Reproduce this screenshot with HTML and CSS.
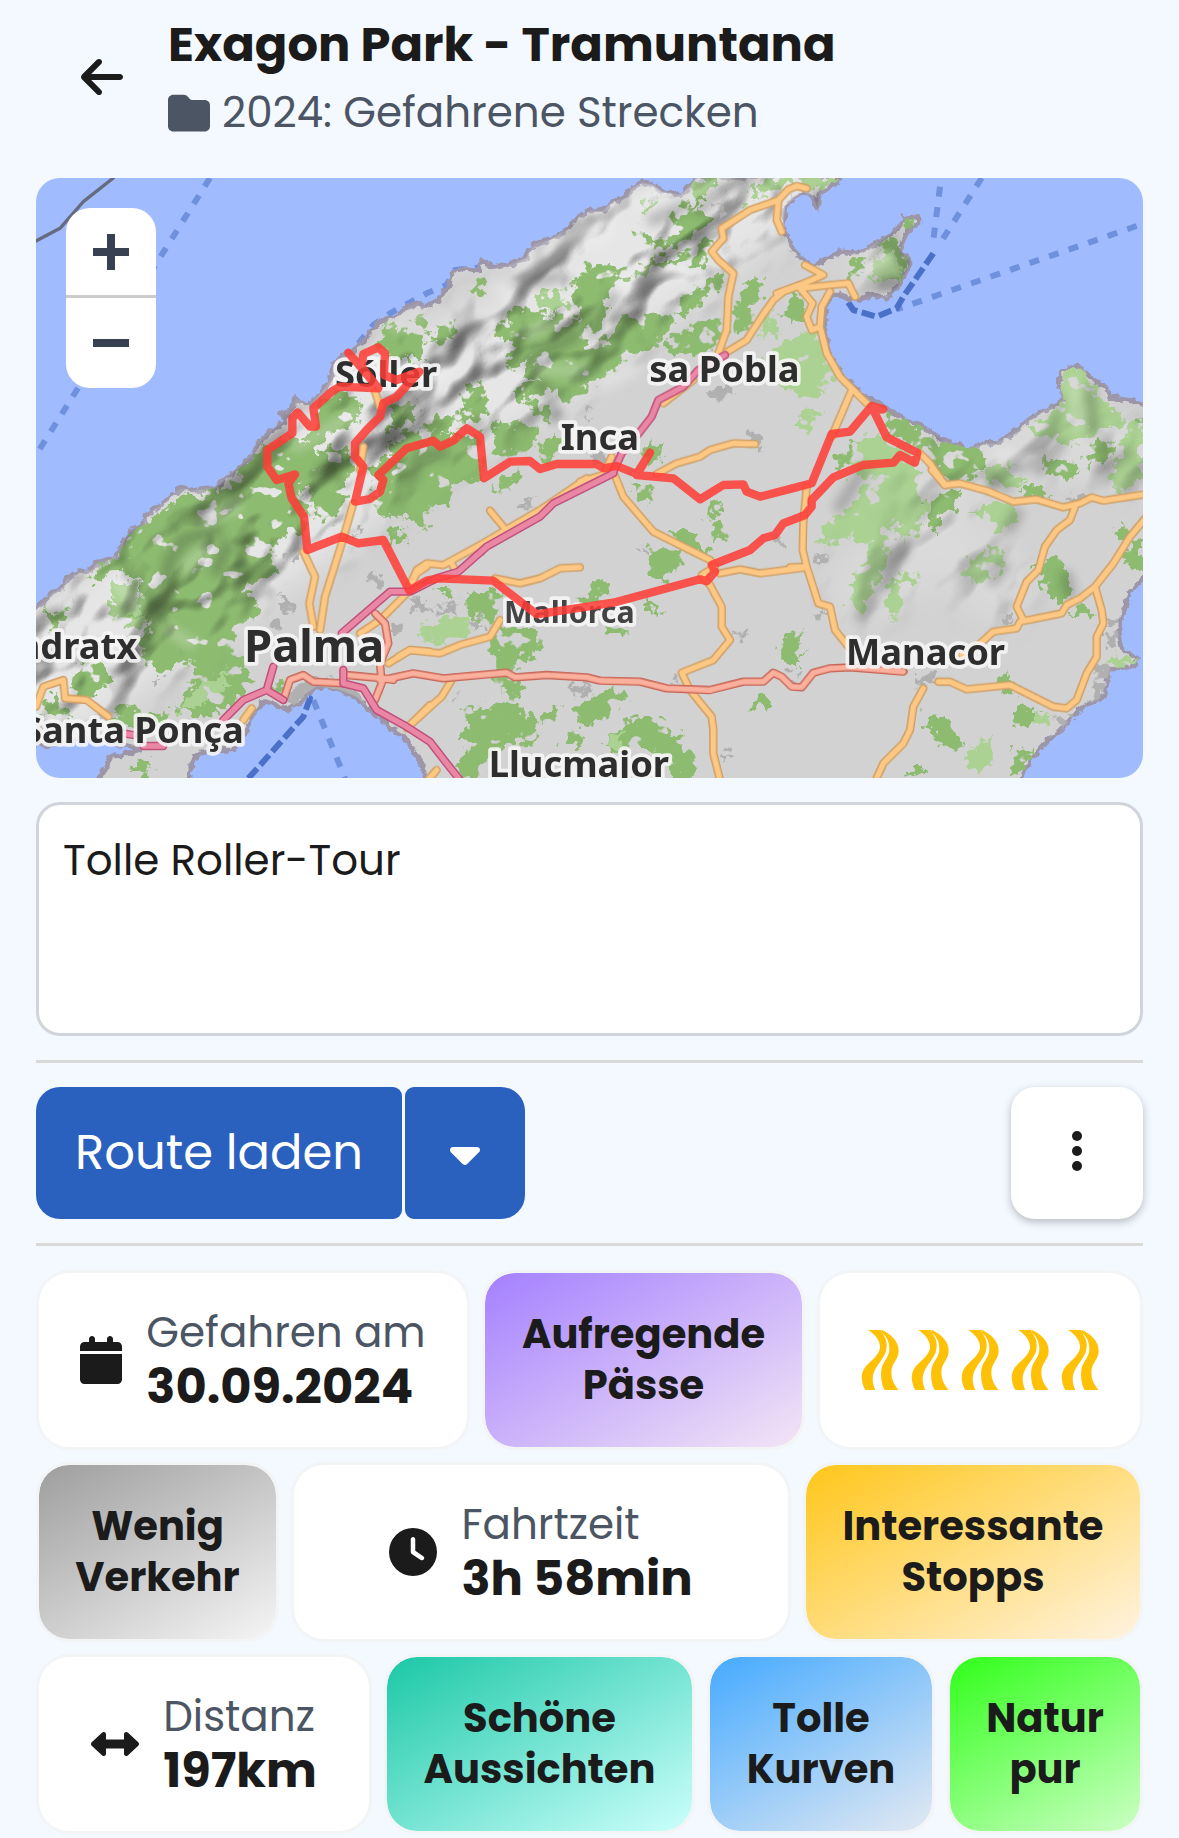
FILE: index.html
```html
<!DOCTYPE html>
<html lang="de">
<head>
    <meta charset="UTF-8">
    <meta name="viewport" content="width=device-width, initial-scale=1.0">
    <title>Exagon Park - Tramuntana</title>
    <link rel="stylesheet" href="styles.css">
</head>
<body>

    <header class="header">
        <a class="back" href="#" aria-label="Zurück">
            <svg viewBox="0 0 448 512" width="42" height="48"><path d="M9.4 233.4c-12.5 12.5-12.5 32.8 0 45.3l160 160c12.5 12.5 32.8 12.5 45.3 0s12.5-32.8 0-45.3L109.2 288 416 288c17.7 0 32-14.3 32-32s-14.3-32-32-32l-306.7 0L214.6 118.6c12.5-12.5 12.5-32.8 0-45.3s-32.8-12.5-45.3 0l-160 160z"/></svg>
        </a>
        <div class="heading">
            <h1>Exagon Park - Tramuntana</h1>
            <p class="folder">
                <svg viewBox="0 0 512 512" width="42" height="42"><path d="M64 480H448c35.3 0 64-28.7 64-64V160c0-35.3-28.7-64-64-64H288c-10.1 0-19.6-4.7-25.6-12.8L243.2 57.6C231.1 41.5 212.1 32 192 32H64C28.7 32 0 60.7 0 96V416c0 35.3 28.7 64 64 64z"/></svg>
                <span>2024: Gefahrene Strecken</span>
            </p>
        </div>
    </header>

    <main class="content">

        <div class="map">
            <svg class="map-canvas" viewBox="18 24 3321 1800" preserveAspectRatio="xMidYMid slice" role="img" aria-label="Karte von Mallorca mit der Route">
                <defs>
                    <!-- roughens forest edges and punches small clearings -->
                    <filter id="rough" x="-5%" y="-5%" width="110%" height="110%">
                        <feTurbulence type="fractalNoise" baseFrequency="0.035" numOctaves="3" seed="4" result="noise"/>
                        <feDisplacementMap in="SourceGraphic" in2="noise" scale="70" xChannelSelector="R" yChannelSelector="G" result="shape"/>
                        <feTurbulence type="fractalNoise" baseFrequency="0.014 0.018" numOctaves="3" seed="21"/>
                        <feColorMatrix values="0 0 0 0 0  0 0 0 0 0  0 0 0 0 0  20 0 0 0 -6" result="holes"/>
                        <feComposite in="shape" in2="holes" operator="in"/>
                    </filter>
                    <filter id="coast" x="-5%" y="-5%" width="110%" height="110%">
                        <feTurbulence type="fractalNoise" baseFrequency="0.05" numOctaves="2" seed="9"/>
                        <feDisplacementMap in="SourceGraphic" scale="24" xChannelSelector="R" yChannelSelector="G"/>
                    </filter>
                    <filter id="soft" x="-20%" y="-20%" width="140%" height="140%">
                        <feGaussianBlur stdDeviation="14"/>
                    </filter>
                    <filter id="hills" x="0%" y="0%" width="100%" height="100%" color-interpolation-filters="sRGB">
                        <feTurbulence type="fractalNoise" baseFrequency="0.004 0.006" numOctaves="3" seed="7"/>
                        <feGaussianBlur stdDeviation="7"/>
                        <feDiffuseLighting surfaceScale="95" diffuseConstant="1.3" lighting-color="#ffffff">
                            <feDistantLight azimuth="250" elevation="50"/>
                        </feDiffuseLighting>
                    </filter>
                    <filter id="fade" x="-20%" y="-20%" width="140%" height="140%">
                        <feGaussianBlur stdDeviation="50"/>
                    </filter>
                    <mask id="range" maskUnits="userSpaceOnUse" x="-200" y="-200" width="3800" height="2300">
                        <path filter="url(#fade)" fill="none" stroke="#ffffff" stroke-width="380" d="M100 1500L500 1200 800 1000 1100 740 1500 540 1800 290 2200 0"/>
                        <path filter="url(#fade)" fill="none" stroke="#666666" stroke-width="200" d="M2560 270L2560 300M2700 940L3050 800 3300 850M2500 1250L2750 1100 2900 1250"/>
                    </mask>
                    <path id="land" d="M-40 1340L18 1315 60 1275 100 1250 110 1225 150 1205 185 1200 200 1180 240 1170 270 1145 285 1110 300 1085 340 1065 345 1040 390 1005 430 970 450 955 500 960 555 955 590 925 620 900 660 865 680 825 720 785 765 755 750 725 775 735 800 685 840 705 880 660 900 630 910 580 960 545 1000 520 1020 485 1050 455 1090 440 1130 415 1160 398 1185 410 1225 390 1240 365 1265 330 1270 305 1300 295 1345 300 1360 272 1385 290 1450 280 1490 262 1500 240 1520 218 1560 210 1600 185 1640 145 1680 122 1720 122 1740 100 1790 80 1805 55 1835 38 1870 45 1895 65 1950 75 1980 50 2000 20 2440 20 2400 50 2370 65 2362 115 2350 80 2320 65 2290 85 2265 110 2260 150 2270 200 2290 240 2320 270 2345 290 2380 275 2430 245 2480 250 2530 225 2570 200 2600 180 2620 145 2660 140 2670 158 2640 175 2625 200 2610 240 2640 270 2640 285 2620 320 2600 355 2570 385 2530 375 2470 390 2430 375 2405 375 2393 400 2385 440 2385 480 2395 540 2420 590 2450 630 2490 670 2540 695 2600 735 2650 755 2700 785 2760 820 2820 835 2860 820 2900 820 2950 790 2980 760 3040 720 3085 705 3100 680 3085 640 3095 605 3135 585 3165 605 3200 640 3230 650 3235 680 3290 690 3330 700 3390 715 3390 1190 3338 1225 3300 1265 3285 1310 3270 1350 3266 1400 3275 1440 3325 1465 3310 1490 3240 1495 3230 1540 3220 1580 3180 1600 3140 1625 3120 1650 3090 1680 3050 1715 3020 1750 2990 1790 2965 1850 1190 1850 1180 1790 1150 1740 1120 1700 1080 1675 1050 1640 1010 1610 980 1580 930 1560 860 1548 830 1570 810 1600 770 1620 740 1605 700 1595 665 1640 650 1680 610 1740 520 1745 490 1765 480 1800 470 1850 190 1850 230 1790 240 1760 300 1750 330 1735 280 1725 200 1705 130 1710 60 1725 -40 1715Z"/>
                    <clipPath id="landClip"><use href="#land"/></clipPath>

                    <g id="secondary">
                        <path d="M1035 665L1050 710M1000 830L990 900"/>
                        <path transform="translate(1110 0)" d="M1220 55L1190 48 1165 58 1135 90 1050 120 965 175 970 205 935 245 955 270 1000 310 985 380 980 480 955 550M1135 90L1130 150 1145 185M965 555L1040 510 1085 440 1120 390 1150 365 1200 345M770 912L830 880 900 860 930 840 1000 820 1065 822M540 935L610 915 635 860M880 630L790 700"/>
                        <path transform="translate(2250 0)" d="M-10 370L60 345 130 315 75 285M60 355L150 345 205 340 225 380M60 355L98 400 80 440 95 480 120 470 125 410 150 365M120 470L140 550 180 620 260 700M215 660L155 800M420 850L450 880 495 945"/>
                        <path transform="translate(0 900)" d="M18 710L40 650 100 630 105 685 170 690 235 740M820 245L855 320 838 400 850 470M970 100L935 220 885 380 870 480M1190 290L1160 310 1130 370 1050 450 990 490M1075 580L1140 540 1200 545M1200 705L1130 775M640 750L665 715"/>
                        <path transform="translate(1110 900)" d="M640 5L670 80 760 185 890 250 930 270 945 290 905 315 930 345 965 410 965 470 990 510 940 570 845 608 870 660 935 740 940 780 940 850 960 930M960 310L1020 298 1080 310 1220 292M28 350L50 300 80 280 130 285 240 225 420 120 560 25M310 170L270 122M285 325L360 340 420 325 480 295 540 292M-5 560L30 540 120 550 180 525 270 500 300 450M155 630L125 680 80 720 25 770M110 900L80 935M165 300L155 280M245 245L235 230"/>
                        <path transform="translate(2250 900)" d="M455 0L495 45 540 40 620 62 700 95 770 88 850 112 900 100 935 82 970 92 1100 72M885 110L870 150 830 180 795 230 775 300 740 335 710 410 730 450M1100 140L1050 200 1000 280 945 350 900 385 860 405 845 430 720 455 710 475 640 485 590 530 545 555M945 350L965 420 970 460 950 500 950 560 920 610 890 690 860 715 820 710 690 645 560 658 510 635 475 635M430 655L400 710 390 780 370 820 310 880 285 935M80 50L70 160 68 240 80 290 115 400 150 410 165 480 205 530M80 290L30 292"/>
                    </g>
                    <g id="trunk">
                        <path transform="translate(0 900)" d="M760 690L780 630 820 615 850 635 940 640M950 615L1060 625 1090 630M1035 430L1065 460 1075 520 1050 580 1055 640 1035 690"/>
                        <path transform="translate(1110 900)" d="M-60 630L-30 625 40 610 130 625 320 608 345 622 440 615 560 622 600 632 720 635 800 655 930 660 1030 635 1090 635 1120 608 1145 620 1175 650 1205 652 1240 608 1290 595 1350 592 1510 605"/>
                    </g>
                    <g id="motorway">
                        <path transform="translate(1110 0)" d="M640 905L665 850 720 785 755 740 775 690 850 650 895 600 975 555"/>
                        <path transform="translate(0 900)" d="M280 790L310 795M340 828L400 828M580 750L640 690 710 660 730 590M710 660L760 690M940 600L940 640 1000 655 1040 720 1130 770 1200 815 1250 880 1290 930M935 490L1080 365 1140 365 1220 325 1285 305 1370 230 1530 140 1570 100 1750 10"/>
                    </g>
                </defs>

                <rect class="water" x="-1000" y="-1000" width="6000" height="4000"/>
                <g class="ferry">
                    <path d="M540 24L18 855M985 520L1030 465 1080 430 1150 392 1190 370 1250 345 1275 300 1350 292"/>
                    <path transform="translate(2250 0)" d="M480 50L460 210M605 24L480 220M1070 168L350 418"/>
                    <path class="ferry-dark" transform="translate(2250 0)" d="M460 250L370 380 350 415 290 440 220 420 200 390"/>
                    <path transform="translate(0 900)" d="M850 690L945 925"/>
                    <path class="ferry-dark" transform="translate(0 900)" d="M655 925L820 740 840 685 800 680"/>
                </g>
                <path class="border-line" d="M18 213L90 175 160 95 250 24"/>

                <g filter="url(#coast)"><use href="#land" class="land"/></g>

                <g clip-path="url(#landClip)">
                    <g class="forest" filter="url(#rough)">
                        <path d="M870 680L960 665 1000 720 950 780 900 790 830 850 820 800 860 770ZM620 900L700 830 790 800 860 850 930 830 970 880 950 950 700 950 640 940ZM1040 520L1070 450 1110 470 1130 500 1200 480 1180 570 1110 570ZM1090 700L1160 690 1150 760 1080 780ZM1000 900L1100 850 1200 790 1350 800 1360 930 1040 940Z"/>
                        <path transform="translate(1110 0)" d="M210 350L240 325 260 380 220 370ZM40 450L80 430 70 500 40 480ZM110 480L160 450 175 480 120 520 90 520ZM330 410L430 430 500 430 540 460 520 380 510 350 560 290 620 275 660 310 740 280 800 250 800 290 660 330 620 370 620 430 600 470 550 490 560 530 600 520 640 500 650 450 700 440 800 430 820 460 760 540 680 560 610 620 560 640 540 690 480 700 470 660 350 690 340 660 410 640 370 610 400 560 340 600 310 560 340 540 370 520 320 520 280 480 320 460ZM710 180L780 210 840 180 810 140 860 110 910 40 915 100 870 110 940 140 880 200 820 240 730 220ZM790 270L880 240 930 190 915 300 850 280ZM830 440L850 380 920 340 960 300 975 330 900 390 880 430ZM790 530L880 460 960 440 980 500 900 560 830 560ZM1000 410L1040 330 1100 325 1060 400 1050 470 1000 490ZM1150 430L1200 370 1220 460ZM200 640L240 640 270 690 230 760 180 750ZM-40 680L60 740 0 780ZM-40 830L120 740 180 720 180 760 60 820 0 860ZM390 680L450 720 450 750 390 730ZM280 770L380 750 420 780 400 830 340 860 280 850ZM420 820L470 790 480 840 440 870ZM740 820L790 830 770 870 740 900Z"/>
                        <path transform="translate(2250 0)" d="M200 320L220 275 260 270 230 320ZM290 230L330 205 360 220 390 270 360 325 320 330 360 290 340 260ZM10 430L40 360 70 370 75 420 30 465ZM320 740L370 730 460 800 440 850 320 790ZM450 810L520 820 610 840 620 890 550 930 490 930 450 870ZM915 850L950 810 1005 830 1000 860 930 885ZM790 850L820 880 890 870 880 920 800 910ZM160 860L230 810 250 870 170 890ZM1065 740L1089 730 1089 770ZM370 160L400 140 405 165 380 180Z"/>
                        <path transform="translate(0 900)" d="M455 80L500 75 560 65 610 40 680 -10 760 -20 800 40 830 110 830 180 760 190 720 240 750 300 680 330 640 350 690 420 640 460 600 530 660 620 620 700 540 740 440 720 500 620 480 560 420 600 340 590 330 520 360 440 280 480 260 430 320 400 330 330 260 300 200 330 175 340 190 290 270 260 300 190 360 150 400 110ZM130 600L180 560 250 620 170 690 120 660ZM50 700L90 640 120 740 40 740ZM240 740L290 700 330 740 420 720 400 770 260 780ZM300 880L340 870 370 890 350 920 310 910ZM830 -30L930 -60 960 20 930 110 900 170 850 130ZM1080 180L1140 190 1130 220 1070 215ZM1060 -40L1200 -60 1290 0 1260 100 1200 120 1180 190 1130 140 1050 140 1030 90ZM40 420L80 430 110 390 120 430 70 480ZM730 645L770 620 760 690Z"/>
                        <path transform="translate(1110 900)" d="M200 370L310 360 300 420 260 460 200 420ZM100 345L160 355 170 390 120 380ZM275 500L330 470 400 480 430 520 380 570 360 560 330 600 360 640 360 690 260 630 290 600ZM530 390L615 320 620 370 560 410ZM610 440L680 460 680 490 620 480ZM730 385L785 420 780 435 740 420ZM745 260L760 220 860 250 800 330 755 320ZM800 190L870 170 880 210 935 250 900 260 820 210ZM700 40L750 50 755 100 710 80ZM920 140L950 85 970 130ZM925 150L960 160 980 215 930 200ZM190 720L330 690 360 720 420 750 400 840 360 800 270 860 220 930 170 890 220 820 170 800 210 770ZM430 720L490 710 450 760 420 750ZM530 720L570 680 640 650 680 690 600 750 540 770ZM490 790L530 780 560 830 500 820ZM600 820L700 745 780 745 840 800 870 860 900 930 820 920 800 860 720 840 640 850ZM1045 710L1090 670 1120 700 1060 715ZM1135 520L1200 480 1200 580 1140 560ZM280 60L350 0 360 20 300 80Z"/>
                        <path transform="translate(2250 900)" d="M440 90L540 60 520 120 480 130 470 195 440 150ZM490 0L560 0 500 30ZM800 0L900 0 880 25 810 20ZM720 60L760 40 810 85 740 80ZM780 350L785 300 750 290 810 260 850 270 860 310 880 360 840 400 780 370ZM1005 190L1020 160 1070 200 1089 210 1089 310 1030 270 1040 210ZM865 430L900 400 950 430 900 440ZM0 540L30 490 65 490 40 540 70 555 30 580ZM650 640L680 605 715 680 660 670ZM695 740L730 700 780 740 750 770 710 765ZM435 740L480 735 545 800 548 845 470 820ZM690 840L760 845 720 920 680 920 710 880ZM380 910L430 885 450 920Z"/>
                    </g>
                    <g class="meadow" filter="url(#rough)">
                        <path d="M250 1230L320 1230 320 1340 260 1350 240 1290ZM280 1370L350 1330 340 1370ZM450 1620L520 1530 600 1500 590 1560 500 1610 450 1630Z"/>
                        <path transform="translate(1110 0)" d="M410 370L480 370 500 430 420 420ZM870 60L900 24 960 24 930 60 880 90ZM1010 110L1060 50 1150 24 1240 24 1180 40 1060 90 1020 120ZM1090 440L1110 420 1135 480 1090 510ZM720 170L740 100 770 70 750 130Z"/>
                        <path transform="translate(2250 0)" d="M-50 560L60 490 115 485 140 560 180 620 130 630 140 670 70 680 -40 620ZM260 300L300 250 350 260 370 310 300 340ZM740 770L830 730 850 660 850 600 890 590 950 650 970 700 1030 730 1030 760 940 790 870 830 830 800 760 800ZM1040 780L1089 740 1089 930 990 930ZM45 770L80 720 120 725 90 790ZM620 900L690 880 710 930 630 930ZM230 820L300 790 400 880 400 930 220 920ZM60 24L180 24 120 60 90 70Z"/>
                        <path transform="translate(1110 900)" d="M50 480L150 440 210 440 200 500 120 520 60 510ZM610 810L680 780 660 830 620 840Z"/>
                        <path transform="translate(2250 900)" d="M110 220L150 160 210 110 250 50 320 0 420 0 410 60 440 100 430 160 370 210 340 200 370 140 300 190 330 250 290 340 240 440 205 400 210 340 260 270 260 230 200 200ZM320 360L370 300 410 320 400 350 360 340 370 400 345 450 325 420ZM570 130L620 100 700 100 720 150 660 190 630 150ZM550 300L600 250 660 240 680 290 600 350ZM550 870L620 790 650 870 600 905ZM610 0L720 0 720 50 640 60ZM760 760L790 725 825 740 810 765ZM1000 0L1089 0 1089 10 1040 60 990 60ZM990 560L1070 560 1070 580 1000 590Z"/>
                    </g>

                    <!-- hill shading -->
                    <g mask="url(#range)" class="relief">
                        <rect filter="url(#hills)" x="-1400" y="-200" width="4800" height="3200" transform="rotate(-38 1000 900)"/>
                    </g>
                    <g class="shade-dark" filter="url(#soft)">
                        <path d="M400 1270L420 1170 460 1110 560 1080M560 1200L590 1130M880 900L960 830M1000 830L1110 800 1230 700M1150 640L1230 560 1300 500 1350 470M1140 930L1170 860 1240 850"/>
                        <path transform="translate(1110 0)" d="M360 340L480 320M580 490L640 380M760 150L850 110M900 120L960 60 1060 24M380 580L440 540 520 500M420 640L450 680 470 740M240 760L200 790"/>
                        <path transform="translate(2250 0)" d="M340 230L380 290M300 340L360 340M930 660L940 780M720 890L800 850M970 900L1040 850M840 820L780 900"/>
                        <path transform="translate(2250 900)" d="M240 440L300 340 370 240M690 170L710 130M640 330L670 290M1040 60L1089 0M870 370L860 320M180 110L250 0M620 20L680 50"/>
                    </g>
                    <g class="shade-light" filter="url(#soft)">
                        <path d="M260 1240L320 1300M470 1190L520 1140M800 830L980 730M1130 700L1260 590M520 1050L620 1010M420 1380L480 1420M1100 470L1170 430"/>
                        <path transform="translate(1110 0)" d="M360 280L430 230 560 170M540 230L620 200 650 130M390 490L440 460M660 350L720 310 850 310M420 600L540 600M290 350L330 380M700 100L780 70M620 640L700 600"/>
                        <path transform="translate(2250 0)" d="M280 300L320 270M880 640L900 760M740 870L660 850"/>
                    </g>

                    <g class="town" filter="url(#rough)">
                        <path d="M1020 1230L1040 1200 1060 1230 1040 1270 1010 1260ZM1080 1370L1110 1350 1130 1385 1100 1400ZM1125 1290L1190 1285 1200 1320 1150 1320ZM750 1265L800 1310 790 1330 750 1300ZM760 1165L805 1145 795 1180ZM770 1570L850 1520 960 1540 1010 1600 980 1610 860 1550 790 1610ZM360 1525L400 1520 385 1550ZM730 1350L760 1345 755 1380 725 1375ZM970 1075L1000 1070 990 1095Z"/>
                        <path transform="translate(1110 0)" d="M940 650L990 650 1000 680 970 700 940 680ZM550 730L580 710 570 750ZM1050 790L1085 790 1085 835 1060 830ZM580 850L620 850 620 880 560 870ZM950 110L980 120 960 140Z"/>
                        <path transform="translate(1110 900)" d="M355 110L400 80 390 120ZM210 450L250 440 255 480 215 485ZM515 640L570 650 550 680 520 670ZM1005 490L1040 495 1020 515ZM950 830L990 850 970 880ZM150 690L175 660 170 690ZM710 240L740 230 730 260ZM820 630L850 610 840 640ZM1120 210L1145 205 1130 235ZM20 390L90 400 80 425 30 415ZM110 410L160 405 165 430 120 430ZM1160 600L1200 600 1195 640 1160 620Z"/>
                        <path transform="translate(2250 900)" d="M400 605L470 600 470 640 410 645ZM870 80L910 78 905 95 870 95ZM20 600L60 600 60 630 30 635ZM105 270L145 262 125 285ZM110 425L135 420 115 450ZM670 450L695 425 705 450ZM835 740L880 735 860 775 835 780ZM980 460L1015 450 1010 540 980 530ZM950 580L990 570 975 680 930 700Z"/>
                    </g>
                </g>

                <use href="#secondary" class="casing secondary-casing"/>
                <use href="#secondary" class="secondary"/>
                <use href="#trunk" class="casing trunk-casing"/>
                <use href="#trunk" class="trunk"/>
                <use href="#motorway" class="casing motorway-casing"/>
                <use href="#motorway" class="motorway"/>

                <g class="labels">
                    <text x="915" y="650">Sóller</text>
                    <text x="1858" y="635">sa Pobla</text>
                    <text x="1592" y="840">Inca</text>
                    <text x="-40" y="1467">ndratx</text>
                    <text class="city" x="642" y="1475">Palma</text>
                    <text x="-24" y="1720">Santa Ponça</text>
                    <text class="island" x="1422" y="1358">Mallorca</text>
                    <text x="2448" y="1486">Manacor</text>
                    <text x="1376" y="1821">Llucmajor</text>
                </g>

                <path class="route" d="M955 548L1000 600 1045 655 930 650 905 665 850 715 858 770 840 770 803 727 787 745 787 790 712 840 712 890 740 930 795 913 775 940 785 985 822 1040 832 1140 935 1100 985 1120 1060 1110 1138 1262 1190 1232 1225 1225 1390 1232 1520 1333 1750 1298 2010 1228 2030 1234 2055 1205 2045 1185 2160 1140 2200 1105 2235 1095 2260 1060 2325 1035 2345 1010 2345 990 2410 922 2500 885 2590 878 2610 855 2655 878 2662 848 2570 802 2530 720 2560 718 2525 708 2460 785 2405 792 2345 940 2190 980 2150 965 2140 943 2080 945 2010 988 1930 925 1820 915 1860 848 1820 912 1760 888 1720 895 1700 882 1580 882 1530 897 1500 873 1440 875 1362 925 1350 800 1310 775 1270 812 1230 830 1210 812 1130 835 1045 915 1060 930 1050 965 1020 987 975 995 1000 890 975 860 975 820 1010 780 1050 740 1060 700 1100 680 1168 605 1100 630 1062 615 1065 550 1045 532 1000 552 995 590 1045 655"/>
            </svg>
            <div class="zoom-control">
                <button type="button" aria-label="Vergrößern">
                    <svg viewBox="0 0 36 36" width="36" height="36"><path d="M14 0h8v14h14v8H22v14h-8V22H0v-8h14z"/></svg>
                </button>
                <button type="button" aria-label="Verkleinern">
                    <svg viewBox="0 0 36 36" width="36" height="36"><path d="M0 14h36v8H0z"/></svg>
                </button>
            </div>
        </div>

        <textarea class="notes" aria-label="Beschreibung">Tolle Roller-Tour</textarea>

        <div class="actions">
            <div class="split-button">
                <button class="load" type="button">Route laden</button>
                <button class="load-more" type="button" aria-label="Weitere Optionen">
                    <svg viewBox="0 0 320 512" width="30" height="48"><path d="M137.4 374.6c12.5 12.5 32.8 12.5 45.3 0l128-128c9.2-9.2 11.9-22.9 6.9-34.9s-16.6-19.8-29.6-19.8L32 192c-12.9 0-24.6 7.8-29.6 19.8s-2.2 25.7 6.9 34.9l128 128z"/></svg>
                </button>
            </div>
            <button class="menu" type="button" aria-label="Menü">
                <svg viewBox="0 0 12 44" width="12" height="44"><circle cx="6" cy="5" r="5"/><circle cx="6" cy="20" r="5"/><circle cx="6" cy="35" r="5"/></svg>
            </button>
        </div>

        <div class="tiles">
            <div class="row row-1">
                <div class="tile">
                    <svg viewBox="0 0 448 512" width="42" height="48"><path d="M96 32V64H48C21.5 64 0 85.5 0 112v48H448V112c0-26.5-21.5-48-48-48H352V32c0-17.7-14.3-32-32-32s-32 14.3-32 32V64H160V32c0-17.7-14.3-32-32-32S96 14.3 96 32zM448 192H0V464c0 26.5 21.5 48 48 48H400c26.5 0 48-21.5 48-48V192z"/></svg>
                    <div class="fact"><span>Gefahren am</span><strong>30.09.2024</strong></div>
                </div>
                <div class="tile tag purple">Aufregende<br>Pässe</div>
                <div class="tile rating" role="img" aria-label="5 von 5 Kurven">
                    <svg viewBox="0 0 112 180" width="38" height="60">
                        <g id="curve">
                            <path d="M20 0H62C60 3 60 5 62 8C76 25 80 45 72 70C62 95 34 115 34 148C34 160 38 172 42 180H12C2 165-2 140 4 125C14 98 50 85 56 55C58 35 42 12 20 0Z"/>
                            <path d="M62 0C90 12 112 35 112 62C112 90 92 95 90 125C90 150 100 165 112 180H70C60 165 56 130 62 110C68 92 84 82 84 55C84 35 76 20 62 8Z"/>
                        </g>
                    </svg>
                    <svg viewBox="0 0 112 180" width="38" height="60"><use href="#curve"/></svg>
                    <svg viewBox="0 0 112 180" width="38" height="60"><use href="#curve"/></svg>
                    <svg viewBox="0 0 112 180" width="38" height="60"><use href="#curve"/></svg>
                    <svg viewBox="0 0 112 180" width="38" height="60"><use href="#curve"/></svg>
                </div>
            </div>
            <div class="row row-2">
                <div class="tile tag grey">Wenig<br>Verkehr</div>
                <div class="tile">
                    <svg viewBox="0 0 512 512" width="48" height="48"><path fill-rule="evenodd" d="M256 0a256 256 0 1 1 0 512A256 256 0 1 1 256 0zM232 120V256c0 8 4 15.500 10.700 20l96 64c11 7.400 25.900 4.400 33.300-6.700s4.400-25.900-6.700-33.300L280 243.200V120c0-13.300-10.700-24-24-24s-24 10.700-24 24z"/></svg>
                    <div class="fact"><span>Fahrtzeit</span><strong>3h 58min</strong></div>
                </div>
                <div class="tile tag yellow">Interessante<br>Stopps</div>
            </div>
            <div class="row row-3">
                <div class="tile">
                    <svg viewBox="0 0 512 512" width="48" height="48"><path d="M504.300 273.600c4.900-4.500 7.700-10.900 7.700-17.600s-2.800-13-7.700-17.600l-112-104c-7-6.500-17.200-8.200-25.900-4.400s-14.400 12.500-14.400 22l0 56-192 0 0-56c0-9.500-5.700-18.200-14.400-22s-18.900-2.100-25.900 4.400l-112 104C2.800 243 0 249.300 0 256s2.800 13 7.700 17.600l112 104c7 6.500 17.200 8.200 25.900 4.400s14.400-12.500 14.400-22l0-56 192 0 0 56c0 9.500 5.700 18.200 14.400 22s18.900 2.100 25.900-4.400l112-104z"/></svg>
                    <div class="fact"><span>Distanz</span><strong>197km</strong></div>
                </div>
                <div class="tile tag teal">Schöne<br>Aussichten</div>
                <div class="tile tag blue">Tolle<br>Kurven</div>
                <div class="tile tag green">Natur<br>pur</div>
            </div>
        </div>
    </main>

</body>
</html>
```

FILE: styles.css
```css
* {
    box-sizing: border-box;
}

body {
    margin: 0;
    background-color: #f4f9ff;
    color: #1b1b1b;
    font-family: Poppins, Inter, sans-serif;
    font-size: 42px;
}

svg {
    display: block;
    flex-shrink: 0;
    fill: currentColor;
}

button, textarea {
    font: inherit;
    color: inherit;
}

button {
    display: flex;
    align-items: center;
    justify-content: center;
    border: 0;
    padding: 0;
    cursor: pointer;
}

/* Header */
.header {
    display: flex;
    align-items: center;
    gap: 45px;
    padding: 9px 36px 33px 81px;
}

.back {
    color: inherit;
}

.heading h1 {
    margin: 0;
    font-size: 48px;
    line-height: 72px;
    font-weight: 700;
}

.folder {
    display: flex;
    align-items: center;
    gap: 12px;
    margin: 0;
    line-height: 64px;
    color: #4b5563;
}

.content {
    padding: 0 36px;
}

/* Map */
.map {
    position: relative;
    height: 600px;
    border-radius: 24px;
    overflow: hidden;
}

.map-canvas {
    width: 100%;
    height: 100%;
}

.map-canvas path, .map-canvas use {
    stroke-linecap: round;
    stroke-linejoin: round;
}

.water { fill: #a0bcff; }
.land { fill: #d2d2d2; stroke: #9c96a8; stroke-width: 14; }
.forest { fill: #8dbb70; }
.meadow { fill: #abd293; }
.town { fill: #b0b0b0; }

.relief {
    mix-blend-mode: multiply;
    opacity: 0.45;
}

.shade-dark, .shade-light {
    fill: none;
    stroke-width: 40;
}

.shade-dark { stroke: #222222; opacity: 0.22; }
.shade-light { stroke: #ffffff; opacity: 0.22; }

.ferry path {
    fill: none;
    stroke: #6f90dc;
    stroke-width: 18;
    stroke-linecap: butt;
    stroke-dasharray: 30 32;
}

.ferry .ferry-dark {
    stroke: #4a70c8;
    stroke-dasharray: 40 14;
}

.border-line {
    fill: none;
    stroke: #666b80;
    stroke-width: 10;
}

.casing { fill: none; stroke-width: 25; }
.secondary, .trunk, .motorway { fill: none; stroke-width: 16; }
.secondary-casing { stroke: #cf9f66; }
.secondary { stroke: #fdc884; }
.trunk-casing { stroke: #c9685a; }
.trunk { stroke: #fab09c; }
.motorway-casing { stroke: #c0507c; }
.motorway { stroke: #ea87a4; }

.labels {
    font-family: "Noto Sans", sans-serif;
    font-size: 109px;
    font-weight: 700;
    fill: #2e2e2e;
    stroke: rgb(245, 245, 245, 0.9);
    stroke-width: 22;
    stroke-linejoin: round;
    paint-order: stroke;
}

.labels .city { font-size: 136px; }
.labels .island { font-size: 91px; fill: #444444; }

.route {
    fill: none;
    stroke: #ff3b35;
    stroke-width: 25;
    opacity: 0.86;
}

.zoom-control {
    position: absolute;
    top: 30px;
    left: 30px;
    width: 90px;
    border-radius: 24px;
    overflow: hidden;
    background-color: #ffffff;
    color: #384152;
}

.zoom-control button {
    width: 100%;
    height: 90px;
    background: none;
}

.zoom-control button:first-child {
    border-bottom: 3px solid #cccccc;
}

/* Notes */
.notes {
    display: block;
    width: 100%;
    height: 234px;
    margin: 24px 0;
    padding: 24px;
    border: 3px solid #d1d5db;
    border-radius: 24px;
    background-color: #ffffff;
    line-height: 63px;
    resize: none;
}

/* Actions */
.actions {
    display: flex;
    justify-content: space-between;
    padding: 24px 0;
    border-top: 3px solid #d9d9d9;
    border-bottom: 3px solid #d9d9d9;
}

.split-button {
    display: flex;
    gap: 3px;
}

.load, .load-more {
    height: 132px;
    background-color: #2a61bf;
    color: #ffffff;
}

.load {
    width: 366px;
    font-size: 48px;
    border-radius: 24px 9px 9px 24px;
}

.load-more {
    width: 120px;
    border-radius: 9px 24px 24px 9px;
}

.menu {
    width: 132px;
    height: 132px;
    border-radius: 24px;
    background-color: #ffffff;
    box-shadow: 0 3px 9px rgb(0, 0, 0, 0.25);
}

/* Tiles */
.tiles {
    display: grid;
    gap: 12px;
    padding-top: 24px;
}

.row {
    display: grid;
    gap: 12px;
}

.row-1 { grid-template-columns: 434fr 323fr 326fr; }
.row-2 { grid-template-columns: 243fr 500fr 340fr; }
.row-3 { grid-template-columns: 336fr 311fr 228fr 196fr; }

.tile {
    display: flex;
    align-items: center;
    justify-content: center;
    gap: 24px;
    min-width: 0;
    height: 180px;
    border: 3px solid #f3f4f6;
    border-radius: 33px;
    background-color: #ffffff;
    background-clip: padding-box;
}

.fact span, .fact strong {
    display: block;
    line-height: 54px;
    white-space: nowrap;
}

.fact span {
    color: #4b5563;
}

.fact strong {
    font-size: 48px;
    font-weight: 700;
}

.tag {
    font-size: 40px;
    font-weight: 700;
    line-height: 51px;
    text-align: center;
}

.rating {
    gap: 12px;
    color: #ffc107;
}

.purple { background-image: linear-gradient(150deg, #a480ff, #f3e5f5); }
.grey { background-image: linear-gradient(150deg, #9e9e9e, #f5f5f5); }
.yellow { background-image: linear-gradient(150deg, #ffc61a, #fff3e0); }
.teal { background-image: linear-gradient(150deg, #1bc8a7, #ccfffc); }
.blue { background-image: linear-gradient(150deg, #45aaff, #e3e9f2); }
.green { background-image: linear-gradient(150deg, #30ff1a, #ccffc4); }
```
